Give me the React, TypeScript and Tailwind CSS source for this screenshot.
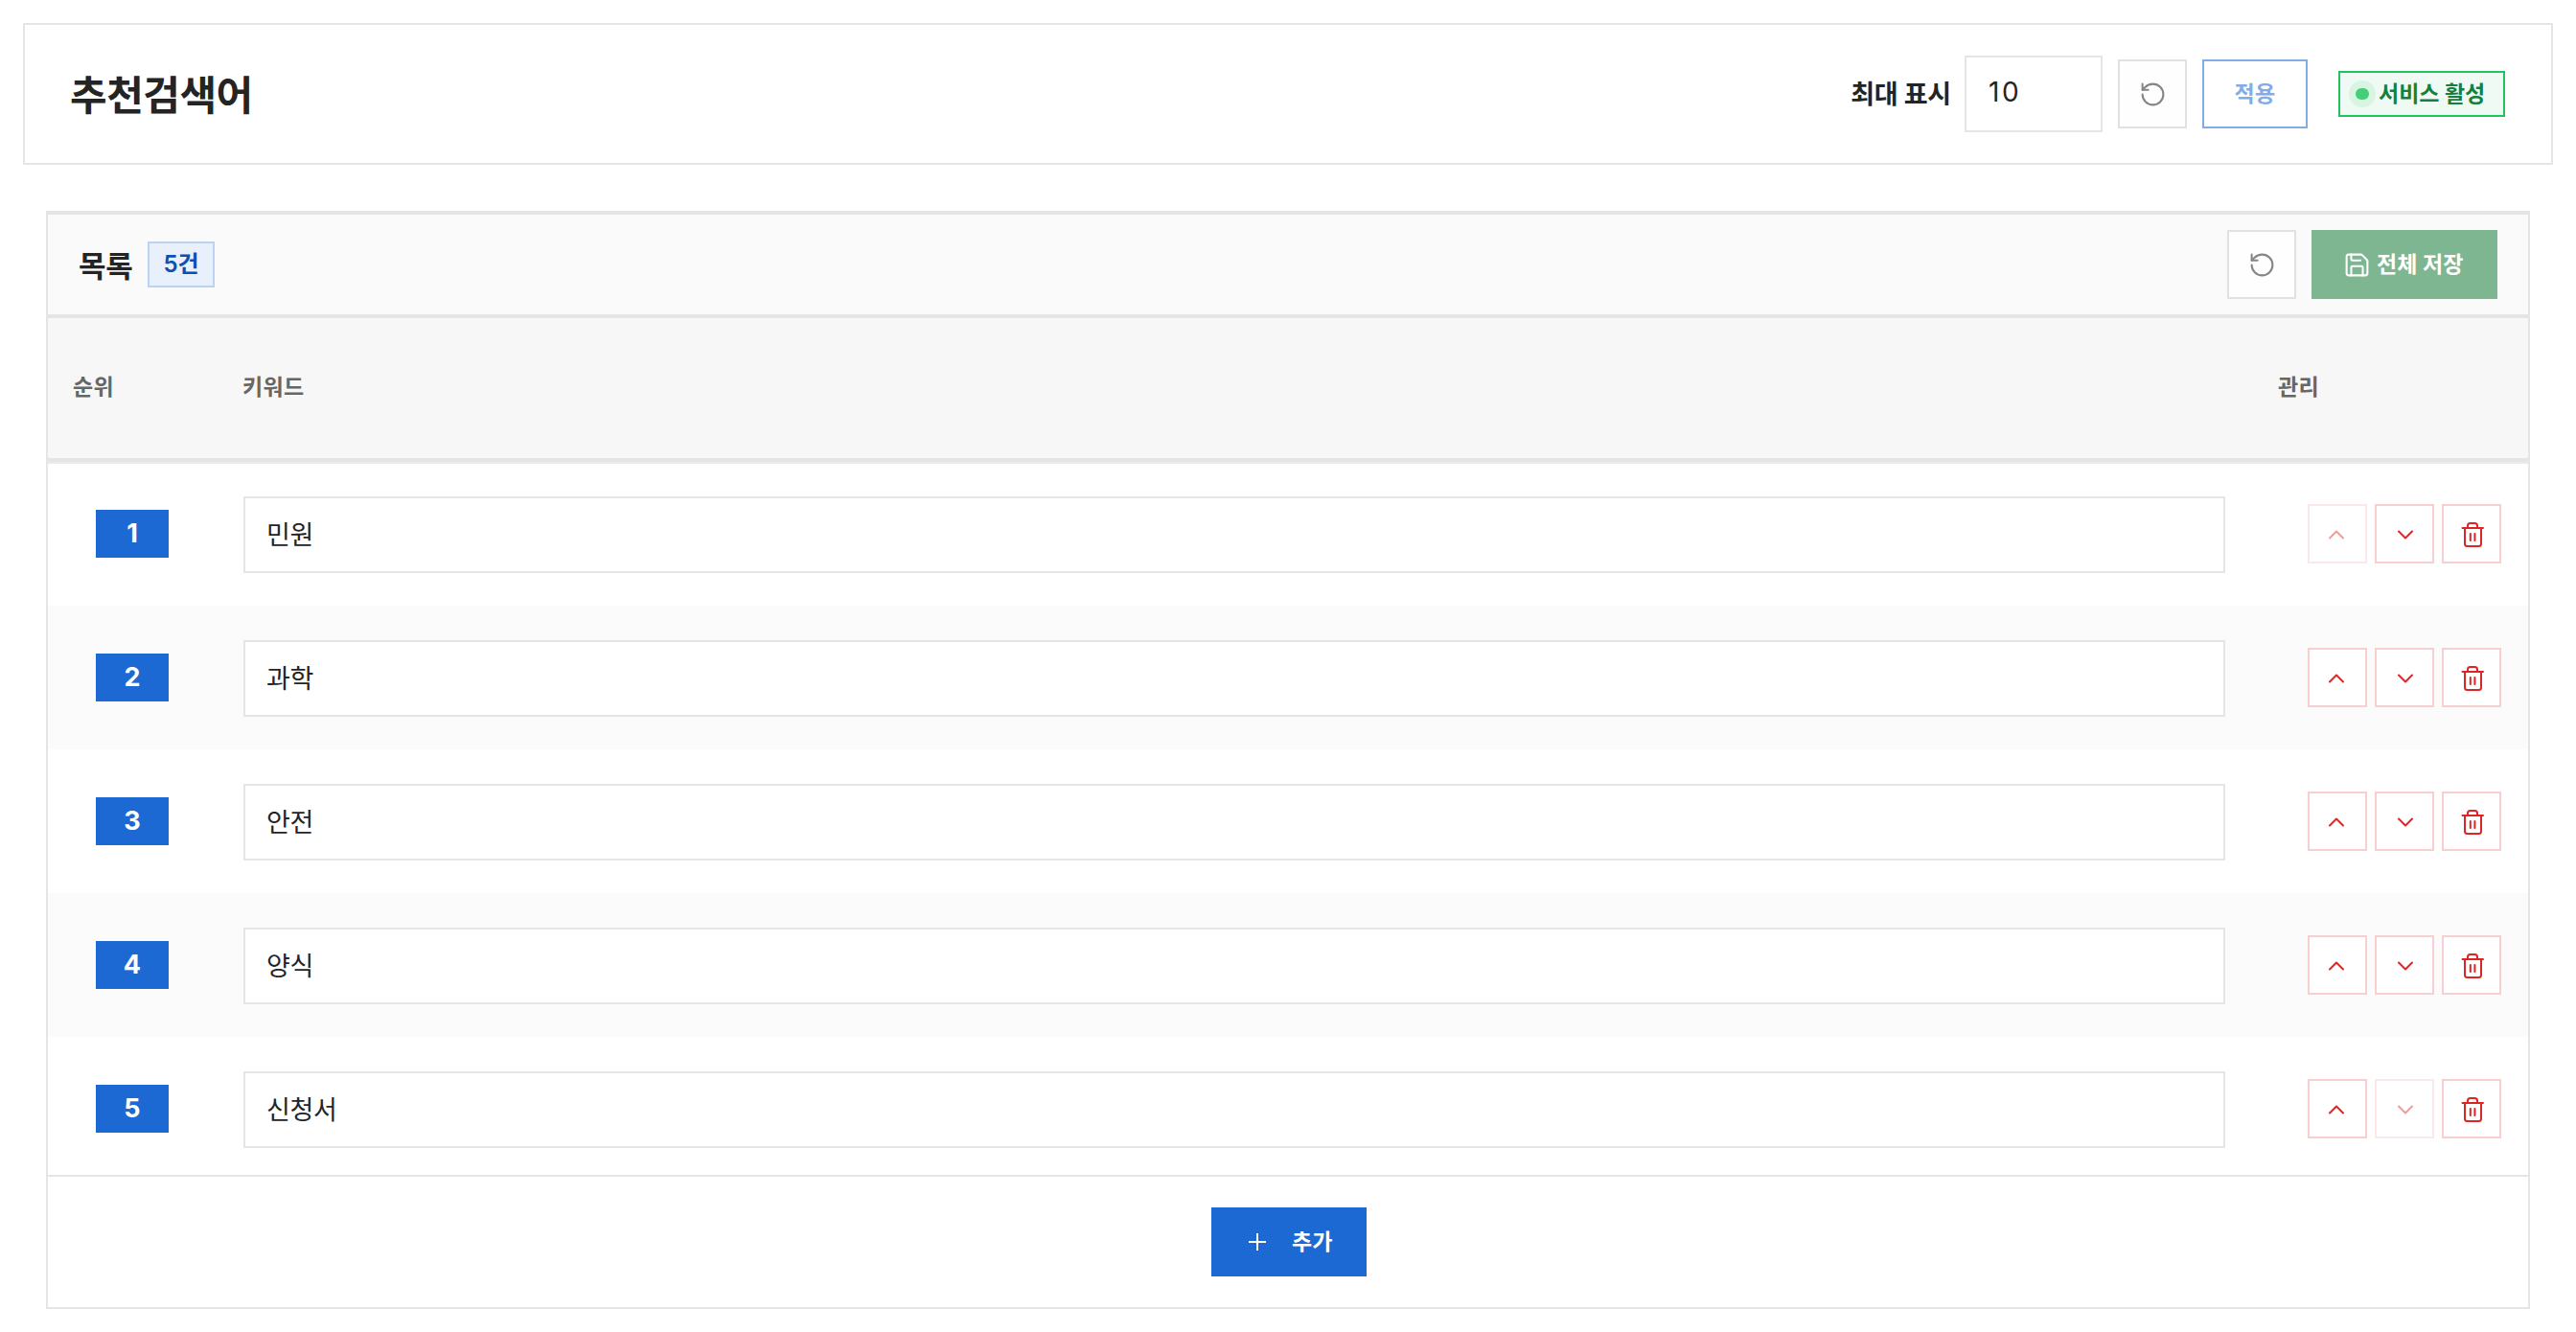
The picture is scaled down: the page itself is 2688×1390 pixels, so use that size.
import type { ReactNode } from "react";
import { RotateCcw, Save } from "lucide-react";

const keywords = ["민원", "과학", "안전", "양식", "신청서"];

function ActionButton({ label, disabled, children }: { label: string; disabled?: boolean; children: ReactNode }) {
  return (
    <button
      type="button"
      aria-label={label}
      disabled={disabled}
      className="size-[62px] border-2 border-[#f7cfcf] bg-white text-[#dc2626] disabled:opacity-45"
    >
      <svg viewBox="2 2 58 58" className="size-[58px]" fill="none" stroke="currentColor" strokeWidth="2" strokeLinecap="round" strokeLinejoin="round">
        {children}
      </svg>
    </button>
  );
}

function ResetButton() {
  return (
    <button
      type="button"
      aria-label="초기화"
      className="flex size-[72px] items-center justify-center border-2 border-[#e1e1e1] bg-[#fefefe] text-[#858585]"
    >
      <RotateCcw size={29} strokeWidth={1.7} />
    </button>
  );
}

function KeywordRow({ rank, keyword, first, last }: { rank: number; keyword: string; first: boolean; last: boolean }) {
  return (
    <div className={`flex h-[150px] shrink-0 items-center ${rank % 2 === 0 ? "bg-[#fbfbfb]" : "bg-white"} ${first ? "border-t-2 border-[#ebebeb]" : ""}`}>
      <div className={`flex w-[204px] pl-[50px] ${first ? "-mt-0.5" : ""}`}>
        <span className="flex h-[50px] w-[76px] items-center justify-center bg-[#1d69d4] pb-px text-[27px] leading-none font-bold text-white">
          {rank}
        </span>
      </div>
      <input
        readOnly
        value={keyword}
        className={`h-20 min-w-0 flex-1 border-2 border-[#e5e5e5] bg-white px-[22px] pb-1 text-[27px] tracking-[-0.3px] text-[#242424] outline-none ${first ? "" : "mt-0.5"}`}
      />
      <div className={`ml-[86px] flex w-[230px] gap-2 ${first ? "-mt-0.5" : ""}`}>
        <ActionButton label="위로" disabled={first}>
          <path d="M23 35.5L30 28.5L37 35.5" />
        </ActionButton>
        <ActionButton label="아래로" disabled={last}>
          <path d="M25 28.5L32 35.5L39 28.5" />
        </ActionButton>
        <ActionButton label="삭제">
          <path d="M21.5 25H43" />
          <path d="M27 25V22.5a2.5 2.5 0 0 1 2.5-2.5h5a2.5 2.5 0 0 1 2.5 2.5V25" />
          <path d="M24 25v16.5a2.5 2.5 0 0 0 2.5 2.5h12a2.5 2.5 0 0 0 2.5-2.5V25" />
          <path d="M29.8 31v7M34.4 31v7" />
        </ActionButton>
      </div>
    </div>
  );
}

export default function App() {
  return (
    <div className="min-h-[1390px] bg-white p-6 font-['Inter','Noto_Sans_CJK_KR',sans-serif] text-[#242424]">
      <header className="flex h-[148px] items-center border-2 border-[#e5e5e5] pr-12 pl-[47px]">
        <h1 className="pt-[3px] text-[42px] leading-none font-bold tracking-[-0.5px]">추천검색어</h1>
        <div className="ml-auto flex items-center gap-4">
          <span className="-mr-0.5 text-[27px] leading-none font-bold tracking-[-0.2px]">최대 표시</span>
          <input readOnly value="10" className="h-20 w-36 border-2 border-[#e5e5e5] bg-white px-[23px] pb-1 text-[28px] tracking-[2.5px] outline-none" />
          <ResetButton />
          <button type="button" className="h-[72px] w-[110px] border-2 border-[#82ace8] text-[23px] font-semibold tracking-[0.3px] text-[#82ace8]">
            적용
          </button>
          <div className="ml-4 flex h-12 w-[174px] items-center border-2 border-[#22c35d] bg-[#f0faf5] pl-[9px] text-[#15803d]">
            <span className="mr-[3px] flex size-7 items-center justify-center rounded-full bg-[#d8f4e3]">
              <span className="h-3 w-3.5 rounded-full bg-[#44cf76]" />
            </span>
            <span className="text-[23px] leading-none font-bold whitespace-nowrap">서비스 활성</span>
          </div>
        </div>
      </header>

      <section className="mx-6 mt-12 border-x-2 border-t-4 border-b-2 border-[#e5e5e5]">
        <div className="flex h-[108px] items-center border-b-4 border-[#e5e5e5] bg-[#fafafa] px-8">
          <h2 className="w-14 pt-0.5 text-[31px] leading-none font-bold tracking-[-0.3px] whitespace-nowrap">목록</h2>
          <span className="ml-4 flex h-12 w-[70px] items-center justify-center border-2 border-[#bbd2f3] bg-[#e8f0fb] pb-px text-2xl leading-none font-semibold text-[#0b50b4]">
            5건
          </span>
          <div className="ml-auto flex gap-4">
            <ResetButton />
            <button type="button" className="flex h-[72px] w-[194px] items-center gap-1.5 bg-[#7eb691] pl-[33px] text-[23px] font-semibold whitespace-nowrap text-white">
              <Save size={29} strokeWidth={1.7} />
              전체 저장
            </button>
          </div>
        </div>

        <div className="flex h-[150px] items-center border-b-4 border-[#e5e5e5] bg-[#f7f7f7] pb-0.5 text-[23px] leading-none font-semibold tracking-[0.3px] text-[#666666]">
          <span className="w-[203px] pl-[26px]">순위</span>
          <span className="flex-1">키워드</span>
          <span className="w-[261px]">관리</span>
        </div>

        <div className="flex h-[744px] flex-col overflow-hidden">
          {keywords.map((keyword, i) => (
            <KeywordRow key={keyword} rank={i + 1} keyword={keyword} first={i === 0} last={i === keywords.length - 1} />
          ))}
        </div>

        <div className="flex h-[138px] items-center justify-center border-t-2 border-[#e5e5e5] pl-0.5">
          <button type="button" className="flex h-[72px] w-[162px] items-center bg-[#1d69d4] pl-[39px] text-[23px] font-bold text-white">
            <svg viewBox="0 0 18 18" className="mr-[27px] size-[18px]" stroke="currentColor" strokeWidth="2">
              <path d="M9 0v18M0 9h18" />
            </svg>
            추가
          </button>
        </div>
      </section>
    </div>
  );
}
